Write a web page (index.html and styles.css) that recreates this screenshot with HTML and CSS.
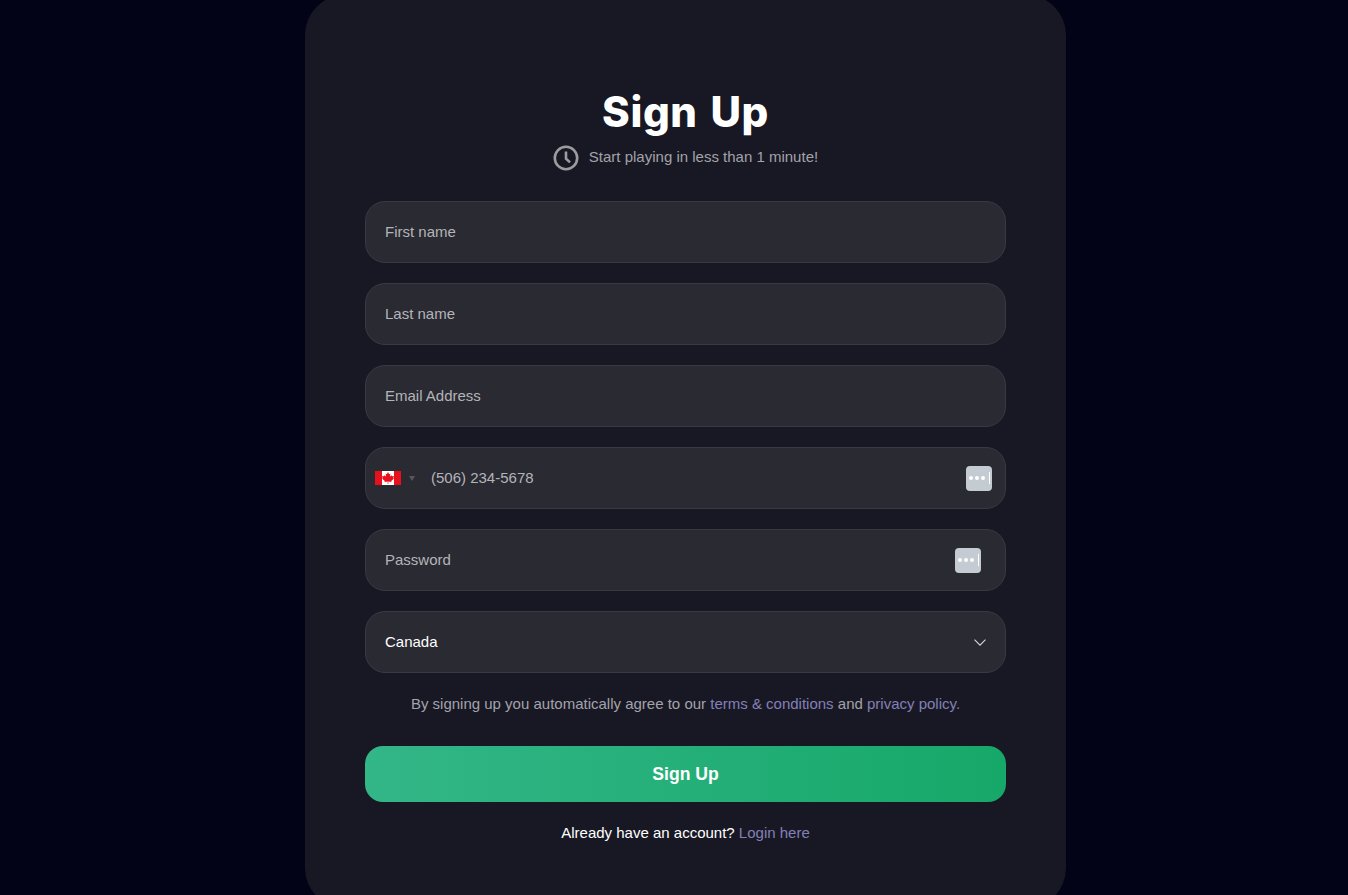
FILE: index.html
```html
<!DOCTYPE html>
<html lang="en">
<head>
<meta charset="utf-8">
<title>Sign Up</title>
<link rel="stylesheet" href="styles.css">
</head>
<body>
<main class="card">
  <h1 class="title">Sign Up</h1>
  <p class="subtitle">
    <svg class="clock" viewBox="0 0 26 26" width="26" height="26" aria-hidden="true"><circle cx="13" cy="13" r="11.2" fill="none" stroke="#9c9c9f" stroke-width="2.6"/><path d="M13 6.5V13.6L17 17.4" fill="none" stroke="#9c9c9f" stroke-width="2.6"/></svg>
    <span>Start playing in less than 1 minute!</span>
  </p>
  <form class="form">
    <div class="field"><span class="placeholder">First name</span></div>
    <div class="field"><span class="placeholder">Last name</span></div>
    <div class="field"><span class="placeholder">Email Address</span></div>
    <div class="field field-phone">
      <svg class="flag" viewBox="0 0 26 14" width="26" height="14" aria-hidden="true"><rect width="26" height="14" fill="#fff"/><rect width="7" height="14" fill="#e8101c"/><rect x="19" width="7" height="14" fill="#e8101c"/><path d="M13 1 L14.2 3.2 L15.4 2.6 L15 5.6 L16.6 4.2 L17 5.3 L19 5 L18.3 7 L19 7.5 L16.2 9.9 L16.5 11 L13.3 10.6 V13 H12.7 V10.6 L9.5 11 L9.8 9.9 L7 7.5 L7.7 7 L7 5 L9 5.3 L9.4 4.2 L11 5.6 L10.6 2.6 L11.8 3.2 Z" fill="#e8101c"/></svg>
      <span class="caret"></span>
      <span class="placeholder phone">(506) 234-5678</span>
      <span class="autofill autofill-phone"><i></i><i></i><i></i><b></b></span>
    </div>
    <div class="field field-password">
      <span class="placeholder">Password</span>
      <span class="autofill"><i></i><i></i><i></i><b></b></span>
    </div>
    <div class="field field-select">
      <span class="value">Canada</span>
      <svg class="chevron" viewBox="0 0 14 9" width="14" height="9" aria-hidden="true"><path d="M1.5 1.6L7 7.1L12.5 1.6" fill="none" stroke="#d8d8dc" stroke-width="1.1"/></svg>
    </div>
  </form>
  <p class="terms">By signing up you automatically agree to our <a href="#">terms &amp; conditions</a> and <a href="#">privacy policy.</a></p>
  <button class="submit" type="button">Sign Up</button>
  <p class="login">Already have an account? <a href="#">Login here</a></p>
</main>
</body>
</html>
```
FILE: styles.css
```css
* { box-sizing: border-box; }
html, body { margin: 0; height: 100%; overflow: hidden; }
body {
  background: #030318;
  font-family: "Liberation Sans", Arial, sans-serif;
  font-size: 15px;
  color: #fff;
}
.card {
  width: 761px;
  margin: -5px 0 0 305px;
  padding: 92px 60px 64px;
  background: #181824;
  border-radius: 40px;
}
.title {
  margin: 0;
  font-family: Inter, sans-serif;
  font-size: 42px;
  font-weight: 800;
  letter-spacing: 0.6px;
  word-spacing: 3px;
  line-height: 50px;
  text-align: center;
  color: #fff;
}
.subtitle {
  margin: 8px 0 30px;
  display: flex;
  justify-content: center;
  align-items: center;
  gap: 10px;
  color: #a3a3a8;
  height: 26px;
  line-height: 22px;
}
.subtitle span { position: relative; top: -1px; }
.form { display: flex; flex-direction: column; gap: 20px; }
.field {
  display: flex;
  align-items: center;
  height: 62px;
  padding: 0 19px 2px;
  background: #2a2a33;
  border: 1px solid #393943;
  border-radius: 20px;
}
.placeholder { color: #b4b4b8; }
.value { color: #fff; }
.field-phone { padding: 0 13px 0 9px; }
.field-phone .phone { position: relative; top: -1px; }
.flag { flex: none; }
.caret {
  width: 0;
  height: 0;
  margin: 0 16px 0 8px;
  border: 3px solid transparent;
  border-top: 5px solid #56565c;
  border-bottom: 0;
}
.phone { flex: 1; }
.field-password { justify-content: space-between; padding: 0 24px 0 19px; }
.field-password .placeholder { position: relative; top: -1px; }
.field-select { justify-content: space-between; padding-right: 18px; padding-bottom: 0; }
.field-select .value { position: relative; top: -1px; }
.autofill {
  flex: none;
  display: flex;
  align-items: center;
  gap: 2px;
  width: 26px;
  height: 25px;
  padding-left: 3px;
  background: #c5cbd3;
  border-radius: 4px;
}
.autofill i { width: 4px; height: 4px; border-radius: 50%; background: #fff; }
.autofill b { width: 1px; height: 12px; margin-left: 2px; background: #fff; }
.terms {
  margin: 20px 0 31px;
  line-height: 22px;
  text-align: center;
  color: #a3a3ab;
}
a { color: #8380b6; text-decoration: none; }
.submit {
  display: block;
  width: 100%;
  height: 56px;
  border: 0;
  border-radius: 18px;
  background: linear-gradient(90deg, #33b688, #16a869);
  color: #fff;
  font: 700 17.6px "Liberation Sans", Arial, sans-serif;
}
.login {
  margin: 20px 0 0;
  line-height: 22px;
  text-align: center;
  color: #fff;
}
```
